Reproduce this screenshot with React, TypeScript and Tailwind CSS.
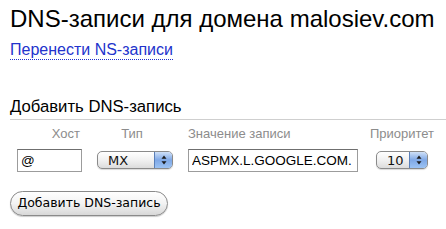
import React from "react";

function MacSelect({ value, width }: { value: string; width: string }) {
  return (
    <div
      className={`relative flex h-[18px] items-center rounded-[5px] border border-[#8a8a8a] bg-gradient-to-b from-[#ffffff] via-[#f1f1f1] to-[#dcdcdc] shadow-[0_1px_1px_rgba(0,0,0,0.15)] ${width}`}
    >
      <span className="pl-[10px] text-[13px] font-medium leading-none text-[#111] [font-family:'DejaVu_Sans',sans-serif]">
        {value}
      </span>
      <div className="absolute right-0 top-0 flex h-full w-[18px] items-center justify-center rounded-r-[4px] border-l border-[#5a7fb8] bg-gradient-to-b from-[#cfe0f7] via-[#7fa8e6] to-[#9cc3f4]">
        <svg width="6" height="10" viewBox="0 0 6 10">
          <path d="M3 0.5 L5.5 3.8 H0.5 Z" fill="#1a1a1a" />
          <path d="M3 9.5 L5.5 6.2 H0.5 Z" fill="#1a1a1a" />
        </svg>
      </div>
    </div>
  );
}

export default function App() {
  return (
    <div className="h-[229px] w-[446px] overflow-hidden bg-white pl-[10px] [font-family:'Liberation_Sans',Arial,sans-serif]">
      <h1 className="pt-[5px] text-[24px] leading-[28px] text-black">
        DNS-записи для домена malosiev.com
      </h1>
      <div className="mt-[8px] leading-[18px]">
        <a
          href="#"
          className="border-b border-dotted border-[#2233cc] pb-[1px] text-[16px] text-[#2233cc] no-underline"
        >
          Перенести NS-записи
        </a>
      </div>
      <h2 className="mt-[38px] text-[16.7px] leading-[20px] text-black">Добавить DNS-запись</h2>
      <div className="mt-[2px] h-px bg-[#cfcfcf]" />
      <div className="mt-[6px] flex items-start">
        <div className="ml-[7px] flex w-[65px] flex-col">
          <div className="pr-[2px] text-right text-[13px] leading-[15px] text-[#8c8c8c]">Хост</div>
          <input
            defaultValue="@"
            className="mt-[8px] h-[23px] w-[65px] border border-[#9c9c9c] border-t-[#6f6f6f] px-[3px] text-[13.5px] text-black outline-none"
          />
        </div>
        <div className="ml-[15px] flex w-[76px] flex-col items-center">
          <div className="pr-[6px] text-[13px] leading-[15px] text-[#8c8c8c]">Тип</div>
          <div className="mt-[10px]">
            <MacSelect value="MX" width="w-[76px]" />
          </div>
        </div>
        <div className="ml-[15px] flex w-[170px] flex-col">
          <div className="text-[13px] leading-[15px] text-[#8c8c8c]">Значение записи</div>
          <input
            defaultValue="ASPMX.L.GOOGLE.COM."
            className="mt-[8px] h-[23px] w-[170px] border border-[#9c9c9c] border-t-[#6f6f6f] px-[3px] text-[13.5px] text-black outline-none"
          />
        </div>
        <div className="ml-[13px] flex w-[62px] flex-col items-center">
          <div className="text-[13px] leading-[15px] text-[#8c8c8c]">Приоритет</div>
          <div className="mt-[10px]">
            <MacSelect value="10" width="w-[52px]" />
          </div>
        </div>
      </div>
      <button className="mt-[19px] flex h-[25px] w-[158px] items-center justify-center rounded-full border border-[#8a8a8a] bg-gradient-to-b from-[#ffffff] via-[#f3f3f3] to-[#d8d8d8] text-[12.5px] text-black shadow-[0_1px_1px_rgba(0,0,0,0.2)] [font-family:'DejaVu_Sans',sans-serif]">
        Добавить DNS-запись
      </button>
    </div>
  );
}
